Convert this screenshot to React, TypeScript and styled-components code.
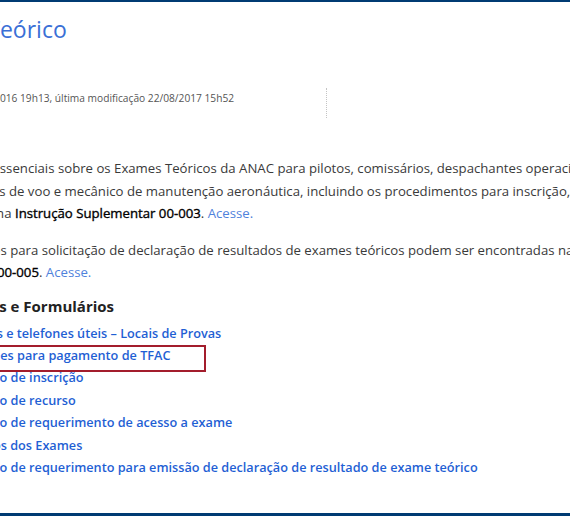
import React from 'react'
import styled, { createGlobalStyle } from 'styled-components'

const GlobalStyle = createGlobalStyle`
  html, body {
    margin: 0;
    padding: 0;
    background: #fff;
    overflow: hidden;
  }
  body {
    font-family: 'Open Sans', 'Liberation Sans', sans-serif;
  }
`

const links = [
  { text: 'Endereços e telefones úteis – Locais de Provas' },
  { text: 'Orientações para pagamento de TFAC', destaque: true },
  { text: 'Formulário de inscrição' },
  { text: 'Formulário de recurso' },
  { text: 'Formulário de requerimento de acesso a exame' },
  { text: 'Resultados dos Exames' },
  { text: 'Formulário de requerimento para emissão de declaração de resultado de exame teórico' },
]

export default function App() {
  return (
    <>
      <GlobalStyle />
      <Pagina>
        <Conteudo>
          <Titulo>Exame Teórico</Titulo>

          <MetaLinha>
            <MetaInfo>criado 23/05/2016 19h13, última modificação 22/08/2017 15h52</MetaInfo>
          </MetaLinha>

          <Texto margem="39px">
            Informações essenciais sobre os Exames Teóricos da ANAC para pilotos, comissários, despachantes operacionais,
            <br />
            coordenadores de voo e mecânico de manutenção aeronáutica, incluindo os procedimentos para inscrição, estão
            <br />
            são descritos na <Forte>Instrução Suplementar 00-003</Forte>. <Acesse href="#">Acesse.</Acesse>
          </Texto>

          <Texto margem="14px">
            As informações para solicitação de declaração de resultados de exames teóricos podem ser encontradas na
            <br />
            <Forte>Instrução IAC 00-005</Forte>. <Acesse href="#">Acesse.</Acesse>
          </Texto>

          <SubTitulo>Documentos e Formulários</SubTitulo>

          <Lista>
            {links.map((l) => (
              <Item key={l.text}>
                <LinkDoc href="#" $destaque={l.destaque}>{l.text}</LinkDoc>
              </Item>
            ))}
          </Lista>
        </Conteudo>
        <Rodape />
      </Pagina>
    </>
  )
}

const Pagina = styled.div`
  display: flex;
  flex-direction: column;
  height: 516px;
  border-top: 2px solid #003b73;
  box-sizing: border-box;
`

const Conteudo = styled.main`
  margin-left: -88px;
  flex: 1;
  white-space: nowrap;
`

const Titulo = styled.h1`
  margin: 12px 0 0 -2.5px;
  font-size: 23px;
  line-height: 30px;
  font-weight: 400;
  color: #3a6fd6;
`

const MetaLinha = styled.div`
  display: flex;
  margin-top: 44px;
  height: 30px;
`

const MetaInfo = styled.div`
  width: 395px;
  margin-left: 19px;
  border-right: 1px dotted #c4c4c4;
  font-size: 10.2px;
  line-height: 20px;
  color: #555;
`

const Texto = styled.p<{ margem: string }>`
  margin: ${(p) => p.margem} 0 0;
  font-size: 13.2px;
  line-height: 22.5px;
  color: #3a3a3a;
`

const Forte = styled.span`
  font-weight: 400;
  color: #000;
  -webkit-text-stroke: 0.35px #000;
`

const Acesse = styled.a`
  color: #4f82dc;
  text-decoration: none;
`

const SubTitulo = styled.h2`
  margin: 11px 0 0;
  font-size: 15px;
  line-height: 22px;
  font-weight: 700;
  color: #222;
`

const Lista = styled.ul`
  list-style: none;
  margin: 5px 0 0;
  padding: 0 0 0 27.5px;
`

const Item = styled.li`
  font-size: 12.7px;
  line-height: 22.4px;
  font-weight: 600;
`

const LinkDoc = styled.a<{ $destaque?: boolean }>`
  position: relative;
  color: #1f5fd4;
  text-decoration: none;
  &::after {
    content: '';
    display: ${(p) => (p.$destaque ? 'block' : 'none')};
    position: absolute;
    top: -1px;
    bottom: -8px;
    left: -40px;
    right: -35px;
    border: 2px solid #a31d2c;
  }
`

const Rodape = styled.footer`
  height: 3px;
  background: #003b73;
`
